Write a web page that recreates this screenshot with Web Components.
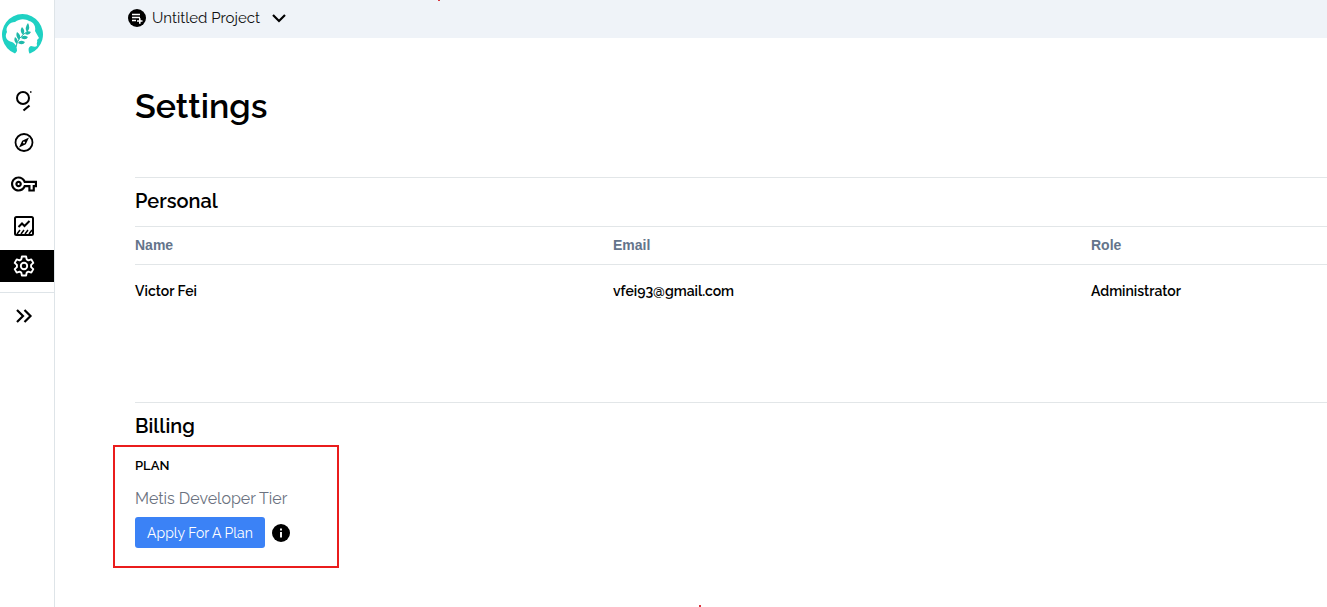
<!DOCTYPE html>
<html lang="en">
<head>
<meta charset="utf-8">
<meta name="viewport" content="width=device-width, initial-scale=1">
<title>Settings</title>
<style>
    body {
        margin: 0;
        background: #fff;
        color: #000;
        font-family: Raleway, Lato, sans-serif;
    }
</style>
</head>
<body>
<settings-app></settings-app>

<script>
const ICONS = {
    logo: `<svg width="44" height="44" viewBox="0 0 44 44">
        <path fill="#1fd1c3" d="M15 40.600A20.500 20.500 0 1 1 30 40.600Z"/>
        <path fill="#fff" d="M14 42L17 38C17 34 16 31 12 29C7 28 4 24 7 19C5 14 10 9 15 9C20 5 26 6 29 8C34 9 36 14 35 18L39 25L37 27C38 29 36 30 37 32C37 34 35 34 31 33C28 34 28 37 30 42Z"/>
        <path d="M16 34Q17 25 28 18" fill="none" stroke="#1fb9aa" stroke-width="1"/>
        <g fill="#1fb9aa">
            <path d="M27 19Q24 15 28 10Q31 15 27 19ZM23 22Q19 18 22 14Q26 18 23 22ZM19 27Q15 23 17 19Q22 22 19 27ZM17 31Q13 28 15 24Q19 27 17 31ZM25 21Q27 17 31 19Q29 23 25 21ZM21 25Q23 21 28 24Q26 28 21 25ZM18 30Q20 26 25 29Q23 33 18 30Z"/>
        </g>
    </svg>`,
    search: `<svg width="24" height="24" viewBox="0 0 24 24" fill="none" stroke="#000" stroke-width="2">
        <circle cx="11" cy="10" r="6"/><path d="M11.500 22.500l6-5" stroke-width="2.200"/><path d="M18 4h1.500" stroke-width="1.500"/>
    </svg>`,
    compass: `<svg width="20" height="20" viewBox="0 0 20 20">
        <circle cx="10" cy="10.500" r="8.500" fill="none" stroke="#000" stroke-width="1.800"/>
        <path fill-rule="evenodd" d="M15 5.500L11.800 12.300L5 15.500L8.200 8.700ZM10 9.500A1 1 0 1 0 10 11.500A1 1 0 1 0 10 9.500Z"/>
    </svg>`,
    key: `<svg width="26" height="26" viewBox="0 0 24 24">
        <path d="M22 19h-6v-4h-2.680c-1.140 2.420-3.600 4-6.320 4-3.860 0-7-3.140-7-7s3.140-7 7-7c2.720 0 5.170 1.580 6.320 4H24v6h-2v4zm-4-2h2v-4h2v-2H11.940l-.23-.67C11.010 8.340 9.110 7 7 7c-2.760 0-5 2.240-5 5s2.240 5 5 5c2.110 0 4.010-1.340 4.710-3.330l.23-.67H18v4zM7 15c-1.650 0-3-1.350-3-3s1.350-3 3-3 3 1.350 3 3-1.350 3-3 3zm0-4c-.55 0-1 .45-1 1s.45 1 1 1 1-.45 1-1-.45-1-1-1z"/>
    </svg>`,
    chart: `<svg width="20" height="20" viewBox="0 0 20 20" fill="none" stroke="#000" stroke-width="2">
        <rect x="1" y="1" width="18" height="18" rx="1.500"/>
        <path d="M4.500 11L8 7.500L10.500 10L15.500 5"/>
        <path d="M3 18l3-4M7 18l3-4M11 18l3-4M15 18l3-4" stroke-width="1.500"/>
    </svg>`,
    gear: `<svg width="24" height="24" viewBox="0 0 24 24" fill="none" stroke="#fff" stroke-width="1.900" stroke-linejoin="round">
        <path d="M9.900 2.500h4.200l.6 2.900 1.700 1 2.900-1 2 3.500-2.200 2v2.200l2.200 2-2 3.500-2.900-1-1.700 1-.6 2.900H9.900l-.6-2.900-1.700-1-2.900 1-2-3.500 2.200-2v-2.200l-2.200-2 2-3.500 2.900 1 1.700-1z"/>
        <circle cx="12" cy="12" r="3.200"/>
    </svg>`,
    expand: `<svg width="24" height="24" viewBox="0 0 24 24" fill="none" stroke="#000" stroke-width="2.200">
        <path d="M5 6l6 6-6 6M12.500 6l6 6-6 6"/>
    </svg>`,
    project: `<svg width="18" height="18" viewBox="0 0 18 18">
        <circle cx="9" cy="9" r="9"/>
        <path d="M4 5.500h8M4 8.500h8M4 11.500h4M9 12h5.500M11.800 9.300v5.400" fill="none" stroke="#fff" stroke-width="1.600"/>
    </svg>`,
    chevron: `<svg width="14" height="10" viewBox="0 0 14 10" fill="none" stroke="#000" stroke-width="2.200">
        <path d="M1 2l6 6 6-6"/>
    </svg>`,
    info: `<svg width="18" height="18" viewBox="0 0 18 18">
        <circle cx="9" cy="9" r="9"/><path d="M9 4.500v2M9 8v5.500" stroke="#fff" stroke-width="1.900"/>
    </svg>`
};

class SideNav extends HTMLElement {
    constructor() {
        super();
        this.attachShadow({ mode: 'open' });
    }

    connectedCallback() {
        this.shadowRoot.innerHTML = `
            <style>
                :host {
                    display: block;
                    border-right: 1px solid #dee4e8;
                }
                svg { display: block; }
                nav {
                    display: flex;
                    flex-direction: column;
                }
                a, button {
                    display: flex;
                    align-items: center;
                    justify-content: center;
                    box-sizing: border-box;
                    height: 32px;
                    width: 100%;
                    padding: 0 6px 0 0;
                    border: 0;
                    background: none;
                }
                nav { gap: 10px; }
                .logo {
                    height: 70px;
                    padding: 0 10px 0 0;
                    margin-bottom: 4px;
                }
                .active {
                    background: #000;
                    margin-top: -2px;
                }
                button {
                    height: 46px;
                    margin-top: 10px;
                    border-top: 1px solid #dee4e8;
                }
            </style>
            <nav aria-label="Main">
                <a class="logo" href="#" aria-label="Home">${ICONS.logo}</a>
                <a href="#" aria-label="Search">${ICONS.search}</a>
                <a href="#" aria-label="Explore">${ICONS.compass}</a>
                <a href="#" aria-label="Keys">${ICONS.key}</a>
                <a href="#" aria-label="Usage">${ICONS.chart}</a>
                <a class="active" href="#" aria-label="Settings">${ICONS.gear}</a>
            </nav>
            <button type="button" aria-label="Expand">${ICONS.expand}</button>
        `;
    }
}

class ProjectBar extends HTMLElement {
    constructor() {
        super();
        this.attachShadow({ mode: 'open' });
    }

    connectedCallback() {
        this.shadowRoot.innerHTML = `
            <style>
                :host {
                    display: flex;
                    height: 38px;
                    padding-left: 73px;
                    background: #eff3f8;
                }
                button {
                    display: flex;
                    align-items: center;
                    height: 36px;
                    padding: 0;
                    border: 0;
                    background: none;
                    color: #111;
                    font: 15px Raleway, Lato, sans-serif;
                }
                span { margin: 0 12px 0 6px; }
            </style>
            <button type="button">${ICONS.project}<span><slot></slot></span>${ICONS.chevron}</button>
        `;
    }
}

class SettingsSection extends HTMLElement {
    constructor() {
        super();
        this.attachShadow({ mode: 'open' });
    }

    connectedCallback() {
        this.shadowRoot.innerHTML = `
            <style>
                :host {
                    display: block;
                    border-top: 1px solid #e2e6e8;
                }
                h2 {
                    margin: 0;
                    padding: 7px 0 9px;
                    font-size: 20px;
                    line-height: 32px;
                    font-weight: 600;
                }
            </style>
            <h2>${this.getAttribute('heading')}</h2>
            <slot></slot>
        `;
    }
}

class MemberTable extends HTMLElement {
    constructor() {
        super();
        this.attachShadow({ mode: 'open' });
        this.members = [
            { name: 'Victor Fei', email: 'vfei93@gmail.com', role: 'Administrator' }
        ];
    }

    connectedCallback() {
        const rows = this.members.map(m => `
            <tr><td>${m.name}</td><td>${m.email}</td><td>${m.role}</td></tr>
        `).join('');

        this.shadowRoot.innerHTML = `
            <style>
                :host { display: block; }
                table {
                    width: 100%;
                    table-layout: fixed;
                    border-collapse: separate;
                    border-spacing: 0;
                }
                th, td {
                    padding: 0;
                    text-align: left;
                }
                th {
                    height: 35px;
                    padding-bottom: 2px;
                    border: 1px solid #e2e6e8;
                    border-width: 1px 0;
                    font: bold 14px "Liberation Sans", sans-serif;
                    color: #64748b;
                }
                td {
                    height: 52px;
                    font-size: 14px;
                    font-weight: 600;
                }
                .wide { width: 40.1%; }
            </style>
            <table>
                <thead><tr><th class="wide">Name</th><th class="wide">Email</th><th>Role</th></tr></thead>
                <tbody>${rows}</tbody>
            </table>
        `;
    }
}

class PlanCard extends HTMLElement {
    constructor() {
        super();
        this.attachShadow({ mode: 'open' });
    }

    connectedCallback() {
        this.shadowRoot.innerHTML = `
            <style>
                :host {
                    display: block;
                    box-sizing: border-box;
                    width: 226px;
                    margin: -6px 0 0 -22px;
                    padding: 7px 20px 18px;
                    border: 2px solid #ea1c1c;
                }
                h3, p { margin: 0; }
                h3 {
                    font-size: 13px;
                    line-height: 24px;
                    font-weight: 600;
                }
                p {
                    margin: 9px 0 6px;
                    font-size: 16px;
                    line-height: 24px;
                    color: #6b7280;
                }
                div {
                    display: flex;
                    align-items: center;
                    gap: 7px;
                }
                button {
                    padding: 0;
                    border: 0;
                    background: none;
                }
                svg { display: block; }
                .apply {
                    height: 31px;
                    padding: 0 10px;
                    border-radius: 3px;
                    background: #3b82f6;
                    color: #fff;
                    font: 14px Raleway, Lato, sans-serif;
                    min-width: 130px;
                    white-space: nowrap;
                }
            </style>
            <h3>PLAN</h3>
            <p><slot></slot></p>
            <div>
                <button class="apply" type="button">Apply For A Plan</button>
                <button type="button" aria-label="Plan info">${ICONS.info}</button>
            </div>
        `;
    }
}

class SettingsApp extends HTMLElement {
    constructor() {
        super();
        this.attachShadow({ mode: 'open' });
    }

    connectedCallback() {
        this.shadowRoot.innerHTML = `
            <style>
                :host {
                    display: grid;
                    grid-template-columns: 55px 1fr;
                    min-height: 100vh;
                    position: relative;
                }
                main { padding: 44px 0 0 80px; }
                h1 {
                    margin: 0 0 47px;
                    font-size: 34px;
                    line-height: 48px;
                    font-weight: 600;
                }
                member-table { margin-bottom: 85px; }
                .mark {
                    position: absolute;
                    width: 2px;
                    height: 2px;
                    background: #d9363e;
                }
                .top { top: -1px; left: 33%; }
                .bottom { bottom: 0; left: 699px; }
            </style>
            <side-nav></side-nav>
            <div>
                <project-bar>Untitled Project</project-bar>
                <main>
                    <h1>Settings</h1>
                    <settings-section heading="Personal">
                        <member-table></member-table>
                    </settings-section>
                    <settings-section heading="Billing">
                        <plan-card>Metis Developer Tier</plan-card>
                    </settings-section>
                </main>
            </div>
            <i class="mark top"></i>
            <i class="mark bottom"></i>
        `;
    }
}

customElements.define('side-nav', SideNav);
customElements.define('project-bar', ProjectBar);
customElements.define('settings-section', SettingsSection);
customElements.define('member-table', MemberTable);
customElements.define('plan-card', PlanCard);
customElements.define('settings-app', SettingsApp);
</script>
</body>
</html>
